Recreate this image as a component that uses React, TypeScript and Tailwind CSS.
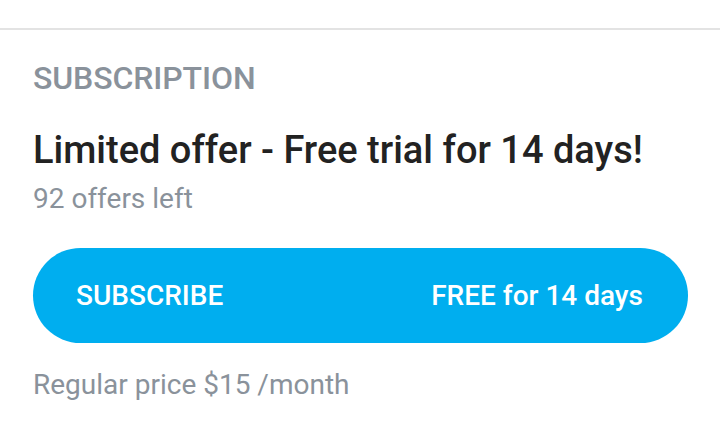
export default function App() {
  return (
    <div className="min-h-[423px] w-[720px] bg-white" style={{ fontFamily: 'Roboto, "Noto Sans", sans-serif' }}>
      <div className="h-[28px]" />
      <div className="h-[2px] bg-[#e3e3e3]" />
      <div className="px-[33px]">
        <div className="mt-[32px] text-[32px] font-medium leading-[32px] tracking-[-0.1px] text-[#8a929b]">SUBSCRIPTION</div>
        <div className="mt-[34px] text-[38px] font-medium leading-[44px] text-[#222222]">
          Limited offer - Free trial for 14 days!
        </div>
        <div className="mt-[11px] text-[28px] leading-[32px] text-[#8a929b]">92 offers left</div>
        <button className="mt-[33px] flex h-[95px] w-[655px] items-center justify-between rounded-full bg-[#00aeef] pl-[43px] pr-[45px] text-[28px] font-medium text-white">
          <span>SUBSCRIBE</span>
          <span>FREE for 14 days</span>
        </button>
        <div className="mt-[26px] text-[28px] leading-[32px] text-[#8a929b]">Regular price $15 /month</div>
      </div>
    </div>
  );
}
